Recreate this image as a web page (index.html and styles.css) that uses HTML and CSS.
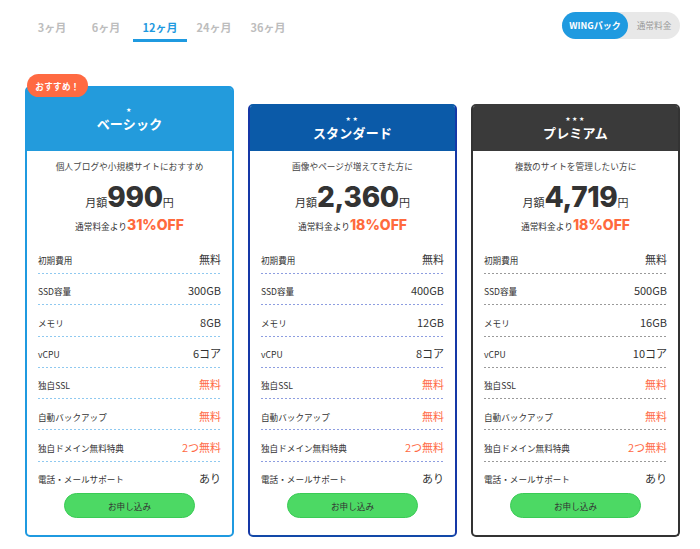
FILE: index.html
```html
<!DOCTYPE html>
<html lang="ja">
<head>
<meta charset="utf-8">
<title>料金プラン</title>
<link rel="stylesheet" href="styles.css">
</head>
<body>
<div class="page">
  <div class="topbar">
    <nav class="tabs">
      <div class="tab">3ヶ月</div>
      <div class="tab">6ヶ月</div>
      <div class="tab active">12ヶ月</div>
      <div class="tab">24ヶ月</div>
      <div class="tab">36ヶ月</div>
    </nav>
    <div class="toggle">
      <span class="opt on">WINGパック</span>
      <span class="opt off-opt">通常料金</span>
    </div>
  </div>

  <div class="cards">
    <div class="card basic">
      <div class="badge">おすすめ！</div>
      <div class="card-head">
        <div class="stars">★</div>
        <div class="title">ベーシック</div>
      </div>
      <div class="card-body">
        <p class="desc">個人ブログや小規模サイトにおすすめ</p>
        <div class="price"><span class="unit">月額</span><span class="num">990</span><span class="unit">円</span></div>
        <div class="off"><span class="off-label">通常料金より</span><span class="off-val">31%OFF</span></div>
        <ul class="specs">
          <li><span class="k">初期費用</span><span class="v">無料</span></li>
          <li><span class="k">SSD容量</span><span class="v">300GB</span></li>
          <li><span class="k">メモリ</span><span class="v">8GB</span></li>
          <li><span class="k">vCPU</span><span class="v">6コア</span></li>
          <li><span class="k">独自SSL</span><span class="v red">無料</span></li>
          <li><span class="k">自動バックアップ</span><span class="v red">無料</span></li>
          <li><span class="k">独自ドメイン無料特典</span><span class="v red">2つ無料</span></li>
          <li><span class="k">電話・メールサポート</span><span class="v">あり</span></li>
        </ul>
        <button class="apply">お申し込み</button>
      </div>
    </div>

    <div class="card standard">
      <div class="card-head">
        <div class="stars">★★</div>
        <div class="title">スタンダード</div>
      </div>
      <div class="card-body">
        <p class="desc">画像やページが増えてきた方に</p>
        <div class="price"><span class="unit">月額</span><span class="num">2,360</span><span class="unit">円</span></div>
        <div class="off"><span class="off-label">通常料金より</span><span class="off-val">18%OFF</span></div>
        <ul class="specs">
          <li><span class="k">初期費用</span><span class="v">無料</span></li>
          <li><span class="k">SSD容量</span><span class="v">400GB</span></li>
          <li><span class="k">メモリ</span><span class="v">12GB</span></li>
          <li><span class="k">vCPU</span><span class="v">8コア</span></li>
          <li><span class="k">独自SSL</span><span class="v red">無料</span></li>
          <li><span class="k">自動バックアップ</span><span class="v red">無料</span></li>
          <li><span class="k">独自ドメイン無料特典</span><span class="v red">2つ無料</span></li>
          <li><span class="k">電話・メールサポート</span><span class="v">あり</span></li>
        </ul>
        <button class="apply">お申し込み</button>
      </div>
    </div>

    <div class="card premium">
      <div class="card-head">
        <div class="stars">★★★</div>
        <div class="title">プレミアム</div>
      </div>
      <div class="card-body">
        <p class="desc">複数のサイトを管理したい方に</p>
        <div class="price"><span class="unit">月額</span><span class="num">4,719</span><span class="unit">円</span></div>
        <div class="off"><span class="off-label">通常料金より</span><span class="off-val">18%OFF</span></div>
        <ul class="specs">
          <li><span class="k">初期費用</span><span class="v">無料</span></li>
          <li><span class="k">SSD容量</span><span class="v">500GB</span></li>
          <li><span class="k">メモリ</span><span class="v">16GB</span></li>
          <li><span class="k">vCPU</span><span class="v">10コア</span></li>
          <li><span class="k">独自SSL</span><span class="v red">無料</span></li>
          <li><span class="k">自動バックアップ</span><span class="v red">無料</span></li>
          <li><span class="k">独自ドメイン無料特典</span><span class="v red">2つ無料</span></li>
          <li><span class="k">電話・メールサポート</span><span class="v">あり</span></li>
        </ul>
        <button class="apply">お申し込み</button>
      </div>
    </div>
  </div>
</div>
</body>
</html>
```

FILE: styles.css
```css
* { box-sizing: border-box; }

body {
  margin: 0;
  background: #fff;
  color: #333;
  font-family: "Noto Sans CJK JP", "Noto Sans", sans-serif;
}

.page { width: 700px; }

/* top bar */
.topbar {
  display: flex;
  justify-content: space-between;
  align-items: flex-start;
  padding: 0 20px 0 25px;
}

.tabs { display: flex; }

.tab {
  width: 54px;
  text-align: center;
  font-size: 11px;
  font-weight: 700;
  line-height: 14px;
  color: #bdbdbd;
  padding-top: 20px;
  padding-bottom: 5px;
  border-bottom: 3px solid transparent;
}

.tab.active {
  color: #1f9ae0;
  border-bottom-color: #1f9ae0;
}

.toggle {
  margin-top: 12px;
  display: flex;
  width: 118px;
  height: 27px;
  background: #e8e8e8;
  border-radius: 14px;
}

.opt {
  display: flex;
  align-items: center;
  justify-content: center;
  font-size: 8.7px;
  color: #999;
}

.opt.on {
  width: 66px;
  background: #1f9ae0;
  color: #fff;
  font-weight: 700;
  font-size: 9px;
  border-radius: 14px;
}

.opt.off-opt { flex: 1; }

/* cards */
.cards {
  display: flex;
  align-items: flex-end;
  gap: 14px;
  padding-left: 25px;
  margin-top: 44px;
}

.card {
  position: relative;
  width: 209px;
  background: #fff;
  border: 2px solid;
  border-radius: 5px;
}

.basic { border-color: #1f9ae0; --head: #239bdc; --dash: #8fc9f0; }
.standard { border-color: #0b5aa8 #1538a6 #1248a8; --head: #0b5aa8; --dash: #8d9de0; }
.premium { border-color: #3a3a3a #333 #333; --head: #3a3a3a; --dash: #9a9a9a; }

.badge {
  position: absolute;
  left: 0;
  top: -14px;
  width: 61px;
  height: 23px;
  border-radius: 12px;
  background: #ff6a42;
  color: #fff;
  font-size: 8.6px;
  font-weight: 700;
  display: flex;
  align-items: center;
  justify-content: center;
  letter-spacing: 0.3px;
}

.card-head {
  height: 45px;
  background: var(--head);
  color: #fff;
  display: flex;
  flex-direction: column;
  align-items: center;
  justify-content: center;
  border-radius: 2px 2px 0 0;
}

.basic .card-head { height: 63px; }

.stars {
  font-family: "DejaVu Sans", sans-serif;
  font-size: 6px;
  line-height: 7px;
  letter-spacing: 1.5px;
}

.title {
  font-size: 13px;
  font-weight: 700;
  line-height: 18px;
  margin-top: 2.5px;
  letter-spacing: 0.2px;
}

.card-body {
  padding: 9px 11px 17px;
}

.desc {
  margin: 0;
  font-size: 8.7px;
  line-height: 14px;
  text-align: center;
  color: #444;
}

.price {
  display: flex;
  justify-content: center;
  align-items: baseline;
  margin-top: 7.8px;
}

.price .unit {
  font-size: 11px;
  line-height: 14px;
  color: #333;
}

.num {
  font-family: "Inter", "Roboto", sans-serif;
  font-weight: 800;
  font-size: 28px;
  line-height: 30px;
  color: #333;
  letter-spacing: -0.3px;
}

.off {
  display: flex;
  justify-content: center;
  align-items: baseline;
  margin-top: 4.2px;
  margin-bottom: 8.7px;
}

.off-label {
  font-size: 8.7px;
  line-height: 14px;
  color: #333;
}

.off-val {
  font-family: "Inter", "Roboto", sans-serif;
  font-weight: 800;
  font-size: 14px;
  line-height: 18px;
  color: #ff6a3d;
}

.specs {
  list-style: none;
  margin: 0;
  padding: 0;
}

.specs li {
  display: flex;
  justify-content: space-between;
  align-items: baseline;
  height: 31.3px;
  padding-top: 9.5px;
  background: linear-gradient(to right, var(--dash) 50%, transparent 50%) left bottom / 4px 1px repeat-x;
}

.specs li:last-child {
  height: 30.3px;
  background: none;
}

.k {
  font-size: 8.6px;
  line-height: 14px;
  color: #333;
}

.v {
  font-size: 11px;
  line-height: 14px;
  color: #333;
}

.v.red { color: #ff6a45; }

.apply {
  display: block;
  margin: 1px auto 0;
  width: 131px;
  height: 25px;
  border-radius: 13px;
  background: #4cd964;
  border: 1px solid #3acb55;
  font-family: "Noto Sans CJK JP", sans-serif;
  font-size: 8.6px;
  color: #333;
  padding: 0;
}
```
